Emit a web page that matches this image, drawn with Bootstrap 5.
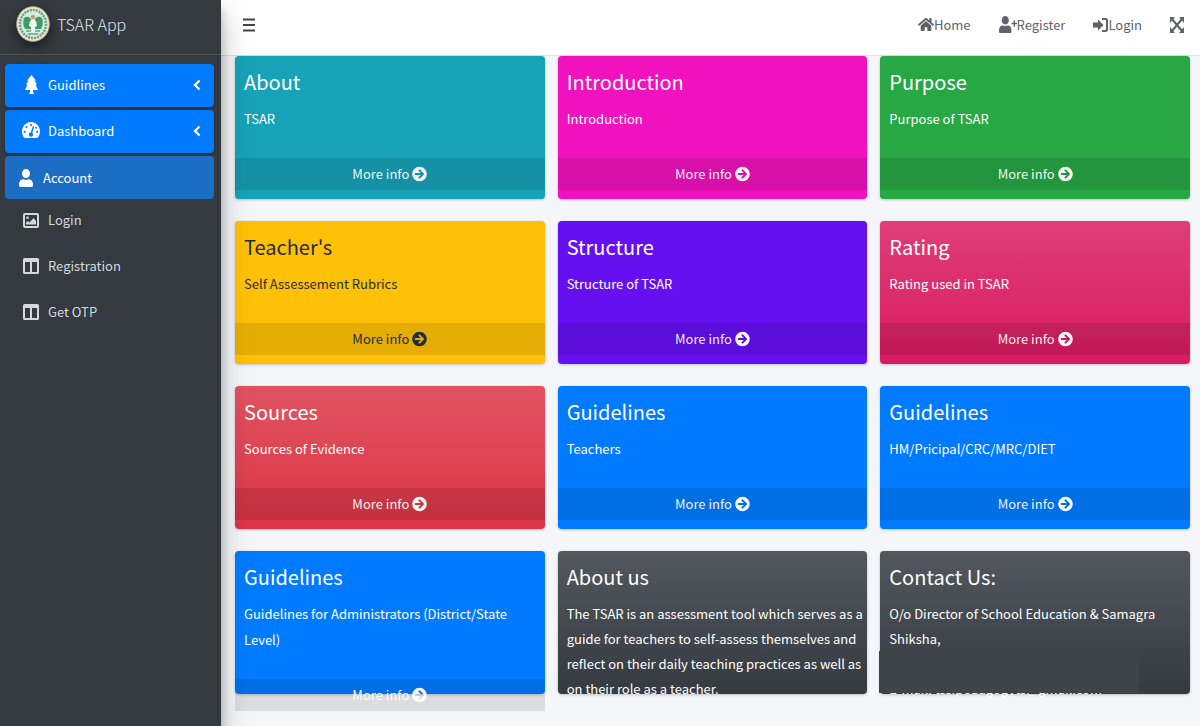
<!DOCTYPE html>
<html lang="en">
<head>
<meta charset="utf-8">
<meta name="viewport" content="width=device-width, initial-scale=1">
<title>TSAR App</title>
<link href="https://cdn.jsdelivr.net/npm/bootstrap@5.3.0/dist/css/bootstrap.min.css" rel="stylesheet">
<style>
body{font-family:"Noto Sans CJK SC","Noto Sans",sans-serif;font-size:13px;line-height:26px;background:#f4f6f9;color:#fff}
a{text-decoration:none}
svg{flex:none}
.side{width:221px;background:#343a40;box-shadow:0 14px 28px rgba(0,0,0,.25),0 10px 10px rgba(0,0,0,.22);z-index:2}
.brand{height:55px;border-bottom:1px solid #4b545c;padding:0 16px 6px;gap:7px;font-size:16px;font-weight:300;color:#dee2e6}
.seal{border-radius:50%;box-shadow:0 5px 12px rgba(0,0,0,.5)}
.menu{padding:9px 7px 0 5px}
.menu a{height:43px;margin-bottom:3px;padding:0 13px 2px 16px;border-radius:4px;color:#d5d9dd}
.menu .ico{width:20px;margin-right:7px;display:flex;justify-content:center}
.menu .lit{background:#007bff;color:#fff;box-shadow:0 1px 3px rgba(0,0,0,.3)}
.menu .here{background:#1c6dc4;color:#fff;padding:0 11px;margin:0}
.submenu a{height:42px;margin-bottom:4px;padding-bottom:0}
.topbar{height:56px;background:#fff;border-bottom:1px solid #dee2e6;padding:0 16px 6px 21px;color:#5f6368}
.topbar a,.topbar button{color:#5f6368}
.topbar button{background:none;border:0;padding:0;display:flex}
.tiles{padding:0 10px 0 14px}
.tiles .row{--bs-gutter-x:13px}
.tile{height:143px;margin-bottom:22px;border-radius:4px;box-shadow:0 0 1px rgba(0,0,0,.125),0 1px 3px rgba(0,0,0,.2)}
.tile .inner{padding:9px 4px 0 9px}
.tile h3{font-size:20px;line-height:34px;font-weight:400;margin:0 0 7px}
.tile p{margin:0 0 26px}
.tile .more{height:32px;background:rgba(0,0,0,.1);color:rgba(255,255,255,.95);gap:3px}
.c-info{background:#17a2b8}.c-pink{background:#f012be}.c-green{background:#28a745}
.c-yellow{background:#ffc107;color:#1f2d3d}.tile.c-yellow .more{color:#1f2d3d}
.c-indigo{background:#6610f2}.c-rose{background:linear-gradient(#df3e77,#d81b60)}
.c-red{background:linear-gradient(#e15361,#dc3545)}.c-blue{background:#007bff}
.c-dark{background:linear-gradient(#52585d,#343a40)}
.tile.c-dark p{line-height:25px}
.veil{position:absolute;left:-1px;top:100px;width:84%;height:42px;background:#3f444a}
</style>
</head>
<body>
<svg width="0" height="0" class="position-absolute">
<symbol id="go" viewBox="0 0 512 512"><path fill="currentColor" d="M256 8c137 0 248 111 248 248S393 504 256 504 8 393 8 256 119 8 256 8zm-28.900 143.600l75.500 72.400H120c-13.300 0-24 10.700-24 24v16c0 13.300 10.700 24 24 24h182.600l-75.500 72.400c-9.700 9.300-9.900 24.800-.4 34.300l11 10.900c9.400 9.400 24.600 9.400 33.900 0L404.300 273c9.400-9.400 9.400-24.600 0-33.900L271.600 106.300c-9.400-9.400-24.600-9.400-33.900 0l-11 10.900c-9.500 9.600-9.300 25.100.4 34.400z"/></symbol>
<symbol id="cols" viewBox="0 0 16 16"><path fill="currentColor" fill-rule="evenodd" d="M1.500 0h13A1.500 1.500 0 0 1 16 1.500v13a1.500 1.500 0 0 1-1.500 1.500h-13A1.500 1.500 0 0 1 0 14.500v-13A1.500 1.500 0 0 1 1.500 0zM2 4v10h5V4zm7 0v10h5V4z"/></symbol>
<symbol id="user" viewBox="0 0 448 512" preserveAspectRatio="none"><path fill="currentColor" d="M224 256c70.700 0 128-57.300 128-128S294.700 0 224 0 96 57.300 96 128s57.300 128 128 128zm89.600 32h-16.700a174 174 0 0 1-145.800 0h-16.700C60.200 288 0 348.200 0 422.400V464c0 26.500 21.500 48 48 48h352c26.500 0 48-21.500 48-48v-41.600c0-74.200-60.200-134.400-134.400-134.400z"/></symbol>
<symbol id="left" viewBox="0 0 8 12"><path d="M6.500 1.500 2 6l4.500 4.500" fill="none" stroke="currentColor" stroke-width="2.300"/></symbol>
</svg>
<div class="d-flex min-vh-100">
<aside class="side flex-shrink-0">
<a href="#" class="brand d-flex align-items-center">
<svg class="seal" width="34" height="36" viewBox="0 0 34 36" aria-hidden="true"><ellipse cx="17" cy="18" rx="16.500" ry="17.500" fill="#e9e4d8" stroke="#a98c6c"/><ellipse cx="17" cy="18" rx="13" ry="14" fill="#dce9df" stroke="#5fa87d" stroke-width="2.500" stroke-dasharray="2 1"/><path d="M8 12q4-3 7 1v10H9q-3-5-1-11zM26 12q-4-3-7 1v10h6q3-5 1-11z" fill="#3f9c69"/><path d="M10 25h14M12 28h10" stroke="#5fa87d" stroke-width="1.500"/><path d="M14 15q3-3 6 0l1 5-2 1v6h-4v-6l-2-1z" fill="#f2f2ee"/><circle cx="17" cy="11" r="2.300" fill="#b9a184"/></svg>
<span>TSAR App</span></a>
<nav class="menu">
<a href="#" class="lit d-flex align-items-center"><span class="ico"><svg width="13" height="19" viewBox="0 0 13 19"><path fill="currentColor" d="M6.500 0 11 5.500H9.500l2.500 4h-1.500l2.500 5.500H8v2l1 2H4l1-2v-2H0l2.500-5.500H1l2.500-4H2z"/></svg></span><span>Guidlines</span><svg class="ms-auto" width="8" height="12"><use href="#left"/></svg></a>
<a href="#" class="lit d-flex align-items-center"><span class="ico"><svg width="18" height="17" viewBox="0 0 18 17"><path fill="currentColor" d="M9 0a9 9.500 0 0 1 7.800 14.200q-.6 1.800-2 1.800H3.200q-1.400 0-2-1.800A9 9.500 0 0 1 9 0z"/><g fill="#007bff"><circle cx="9" cy="3" r="1.100"/><circle cx="4.500" cy="5" r="1.100"/><circle cx="2.800" cy="9.800" r="1.100"/><circle cx="15.200" cy="9.800" r="1.100"/><circle cx="14" cy="5.800" r="1"/><path d="m11 4 1.200.4L10.300 11a2 2 0 1 1-1.500-.5z"/></g></svg></span><span>Dashboard</span><svg class="ms-auto" width="8" height="12"><use href="#left"/></svg></a>
<a href="#" class="here d-flex align-items-center"><span class="ico"><svg width="14" height="18"><use href="#user"/></svg></span><span>Account</span></a>
<div class="submenu">
<a href="#" class="d-flex align-items-center"><span class="ico"><svg width="16" height="15" viewBox="0 0 16 15"><rect x="1" y="1" width="14" height="13" rx="1" fill="none" stroke="currentColor" stroke-width="2"/><circle cx="4.500" cy="4.800" r="1.300" fill="currentColor"/><path d="M3 11.500V9.500L5 8l1.500 1.500L10.500 5 13 8v3.500z" fill="currentColor"/></svg></span><span>Login</span></a>
<a href="#" class="d-flex align-items-center"><span class="ico"><svg width="16" height="16"><use href="#cols"/></svg></span><span>Registration</span></a>
<a href="#" class="d-flex align-items-center"><span class="ico"><svg width="16" height="16"><use href="#cols"/></svg></span><span>Get OTP</span></a>
</div>
</nav>
</aside>
<div class="flex-grow-1">
<header class="topbar d-flex align-items-center">
<button type="button" aria-label="Toggle menu"><svg width="14" height="14" viewBox="0 0 14 14"><path d="M1 1.500h12M1 7h12M1 12.500h12" stroke="#444" stroke-width="2"/></svg></button>
<nav class="d-flex align-items-center ms-auto">
<a href="#" class="d-flex align-items-center me-4 pe-1"><svg width="16" height="15" viewBox="0 0 576 512" preserveAspectRatio="none"><path fill="currentColor" d="M280 148 96 300v164a16 16 0 0 0 16 16h112a16 16 0 0 0 16-16v-96a16 16 0 0 1 16-16h64a16 16 0 0 1 16 16v96a16 16 0 0 0 16 16h112a16 16 0 0 0 16-16V300L296 148a13 13 0 0 0-16 0zM571 251l-83-69V44a12 12 0 0 0-12-12h-56a12 12 0 0 0-12 12v72l-89-74a48 48 0 0 0-61 0L5 251a12 12 0 0 0-2 17l25 31a12 12 0 0 0 17 2L280 107a13 13 0 0 1 16 0l235 194a12 12 0 0 0 17-2l25-31a12 12 0 0 0-2-17z"/></svg>Home</a>
<a href="#" class="d-flex align-items-center me-4 pe-1"><svg width="18" height="17" viewBox="0 0 640 512" preserveAspectRatio="none"><use href="#user" width="448" height="512"/><path d="M640 200v48h-72v72h-48v-72h-72v-48h72v-72h48v72z" fill="currentColor"/></svg>Register</a>
<a href="#" class="d-flex align-items-center me-4 pe-1"><svg width="15" height="14" viewBox="0 0 15 14"><path d="M0 4.500h5V1.500l5.500 5.500L5 12.500v-3H0z" fill="currentColor"/><path d="M9 1h3.500Q14 1 14 2.500v9q0 1.500-1.500 1.500H9" fill="none" stroke="currentColor" stroke-width="2"/></svg>Login</a>
<button type="button" aria-label="Full screen"><svg width="14" height="16" viewBox="0 0 14 16"><path d="m2 2 10 12M12 2 2 14" stroke="currentColor" stroke-width="2"/><path d="M0 0h5L0 6zM14 0H9l5 6zM0 16h5L0 10zM14 16H9l5-6z" fill="currentColor"/></svg></button>
</nav>
</header>
<main class="tiles"><div class="row">
<div class="col-4"><section class="tile c-info"><div class="inner"><h3>About</h3><p>TSAR</p></div><a href="#" class="more d-flex align-items-center justify-content-center">More info <svg width="15" height="16"><use href="#go"/></svg></a></section></div>
<div class="col-4"><section class="tile c-pink"><div class="inner"><h3>Introduction</h3><p>Introduction</p></div><a href="#" class="more d-flex align-items-center justify-content-center">More info <svg width="15" height="16"><use href="#go"/></svg></a></section></div>
<div class="col-4"><section class="tile c-green"><div class="inner"><h3>Purpose</h3><p>Purpose of TSAR</p></div><a href="#" class="more d-flex align-items-center justify-content-center">More info <svg width="15" height="16"><use href="#go"/></svg></a></section></div>
<div class="col-4"><section class="tile c-yellow"><div class="inner"><h3>Teacher's</h3><p>Self Assessement Rubrics</p></div><a href="#" class="more d-flex align-items-center justify-content-center">More info <svg width="15" height="16"><use href="#go"/></svg></a></section></div>
<div class="col-4"><section class="tile c-indigo"><div class="inner"><h3>Structure</h3><p>Structure of TSAR</p></div><a href="#" class="more d-flex align-items-center justify-content-center">More info <svg width="15" height="16"><use href="#go"/></svg></a></section></div>
<div class="col-4"><section class="tile c-rose"><div class="inner"><h3>Rating</h3><p>Rating used in TSAR</p></div><a href="#" class="more d-flex align-items-center justify-content-center">More info <svg width="15" height="16"><use href="#go"/></svg></a></section></div>
<div class="col-4"><section class="tile c-red"><div class="inner"><h3>Sources</h3><p>Sources of Evidence</p></div><a href="#" class="more d-flex align-items-center justify-content-center">More info <svg width="15" height="16"><use href="#go"/></svg></a></section></div>
<div class="col-4"><section class="tile c-blue"><div class="inner"><h3>Guidelines</h3><p>Teachers</p></div><a href="#" class="more d-flex align-items-center justify-content-center">More info <svg width="15" height="16"><use href="#go"/></svg></a></section></div>
<div class="col-4"><section class="tile c-blue"><div class="inner"><h3>Guidelines</h3><p>HM/Pricipal/CRC/MRC/DIET</p></div><a href="#" class="more d-flex align-items-center justify-content-center">More info <svg width="15" height="16"><use href="#go"/></svg></a></section></div>
<div class="col-4"><section class="tile c-blue"><div class="inner"><h3>Guidelines</h3><p>Guidelines for Administrators (District/State Level)</p></div><a href="#" class="more d-flex align-items-center justify-content-center">More info <svg width="15" height="16"><use href="#go"/></svg></a></section></div>
<div class="col-4"><section class="tile c-dark"><div class="inner"><h3>About us</h3><p class="mb-0">The TSAR is an assessment tool which serves as a guide for teachers to self-assess themselves and reflect on their daily teaching practices as well as on their role as a teacher.</p></div></section></div>
<div class="col-4"><section class="tile c-dark position-relative"><div class="inner"><h3>Contact Us:</h3><p class="mb-0">O/o Director of School Education &amp; Samagra Shiksha,<br>&nbsp;<br>E-mail: tss.pedagogyts@gmail.com</p></div><div class="veil"></div></section></div>
</div></main>
</div>
</div>
<script src="https://cdn.jsdelivr.net/npm/bootstrap@5.3.0/dist/js/bootstrap.bundle.min.js"></script>
</body>
</html>
